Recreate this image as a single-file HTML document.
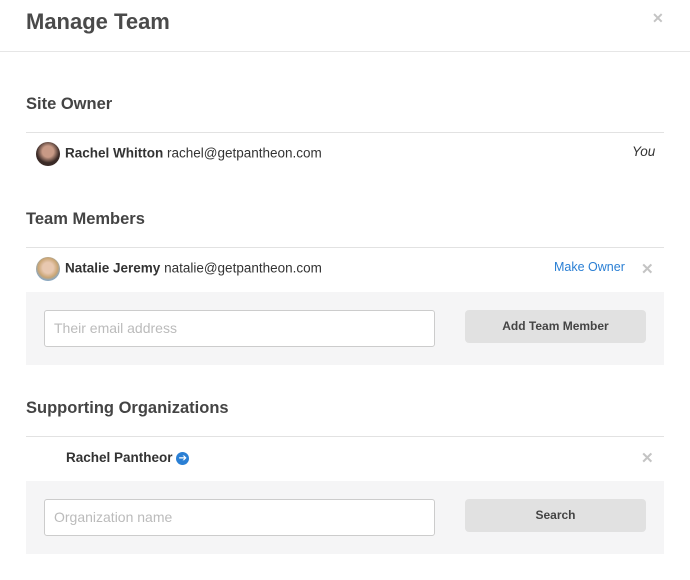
<!DOCTYPE html><html><head><style>
body{margin:0;width:690px;height:580px;background:#fff;font-family:"Liberation Sans",sans-serif;color:#333;position:relative;overflow:hidden}
.a{position:absolute}
h1{position:absolute;left:26px;top:9px;margin:0;font-size:22px;font-weight:bold;color:#4a4a4a}
.h{position:absolute;left:26px;font-size:16.5px;font-weight:bold;color:#444;margin:0}
.rule{position:absolute;left:26px;width:638px;height:1px;background:#e2e2e2}
.panel{position:absolute;left:26px;width:638px;height:73px;background:#f5f5f6}
.inp{position:absolute;left:44px;width:389px;height:35px;border:1px solid #ccc;border-radius:3px;background:#fff;font-size:14px;color:#bbb;line-height:35px;text-indent:9px}
.btn{position:absolute;left:465px;width:181px;height:33px;border-radius:4px;background:#e1e1e1;font-size:12px;font-weight:bold;color:#444;text-align:center;line-height:33px}
.row{position:absolute;font-size:13.5px;color:#333}
.x{position:absolute;color:#c4c4c4;font-size:15px;font-weight:bold}
.av{display:inline-block;width:24px;height:24px;border-radius:50%;vertical-align:middle;margin-right:5px}
</style></head><body>
<h1>Manage Team</h1>
<div class="x" style="left:652px;top:10px;font-size:14px">✕</div>
<div class="a" style="left:0;top:51px;width:690px;height:1px;background:#e6e6e6"></div>
<div class="h" style="top:95px">Site Owner</div>
<div class="rule" style="top:132px"></div>
<div class="row" style="left:36px;top:142px"><span class="av" style="background:radial-gradient(circle at 50% 40%,#c89a86 30%,#3a2a26 60%)"></span><b>Rachel Whitton</b> rachel@getpantheon.com</div>
<div class="row" style="left:632px;top:144px;font-style:italic">You</div>
<div class="h" style="top:210px">Team Members</div>
<div class="rule" style="top:247px"></div>
<div class="row" style="left:36px;top:257px"><span class="av" style="background:radial-gradient(circle at 50% 45%,#e8c8b0 30%,#c9a574 55%,#8aa7c0 70%)"></span><b>Natalie Jeremy</b> natalie@getpantheon.com</div>
<div class="row" style="left:554px;top:260px;color:#2a7fd4;font-size:12.5px">Make Owner</div>
<div class="x" style="left:641px;top:260px">✕</div>
<div class="panel" style="top:292px"></div>
<div class="inp" style="top:310px">Their email address</div>
<div class="btn" style="top:310px">Add Team Member</div>
<div class="h" style="top:399px">Supporting Organizations</div>
<div class="rule" style="top:436px"></div>
<div class="row" style="left:66px;top:450px"><b>Rachel Pantheor</b> <span style="display:inline-block;width:13px;height:13px;border-radius:50%;background:#2a7fd4;color:#fff;font-size:10px;line-height:13px;text-align:center;vertical-align:1px">➔</span></div>
<div class="x" style="left:641px;top:449px">✕</div>
<div class="panel" style="top:481px"></div>
<div class="inp" style="top:499px">Organization name</div>
<div class="btn" style="top:499px">Search</div>
</body></html>
